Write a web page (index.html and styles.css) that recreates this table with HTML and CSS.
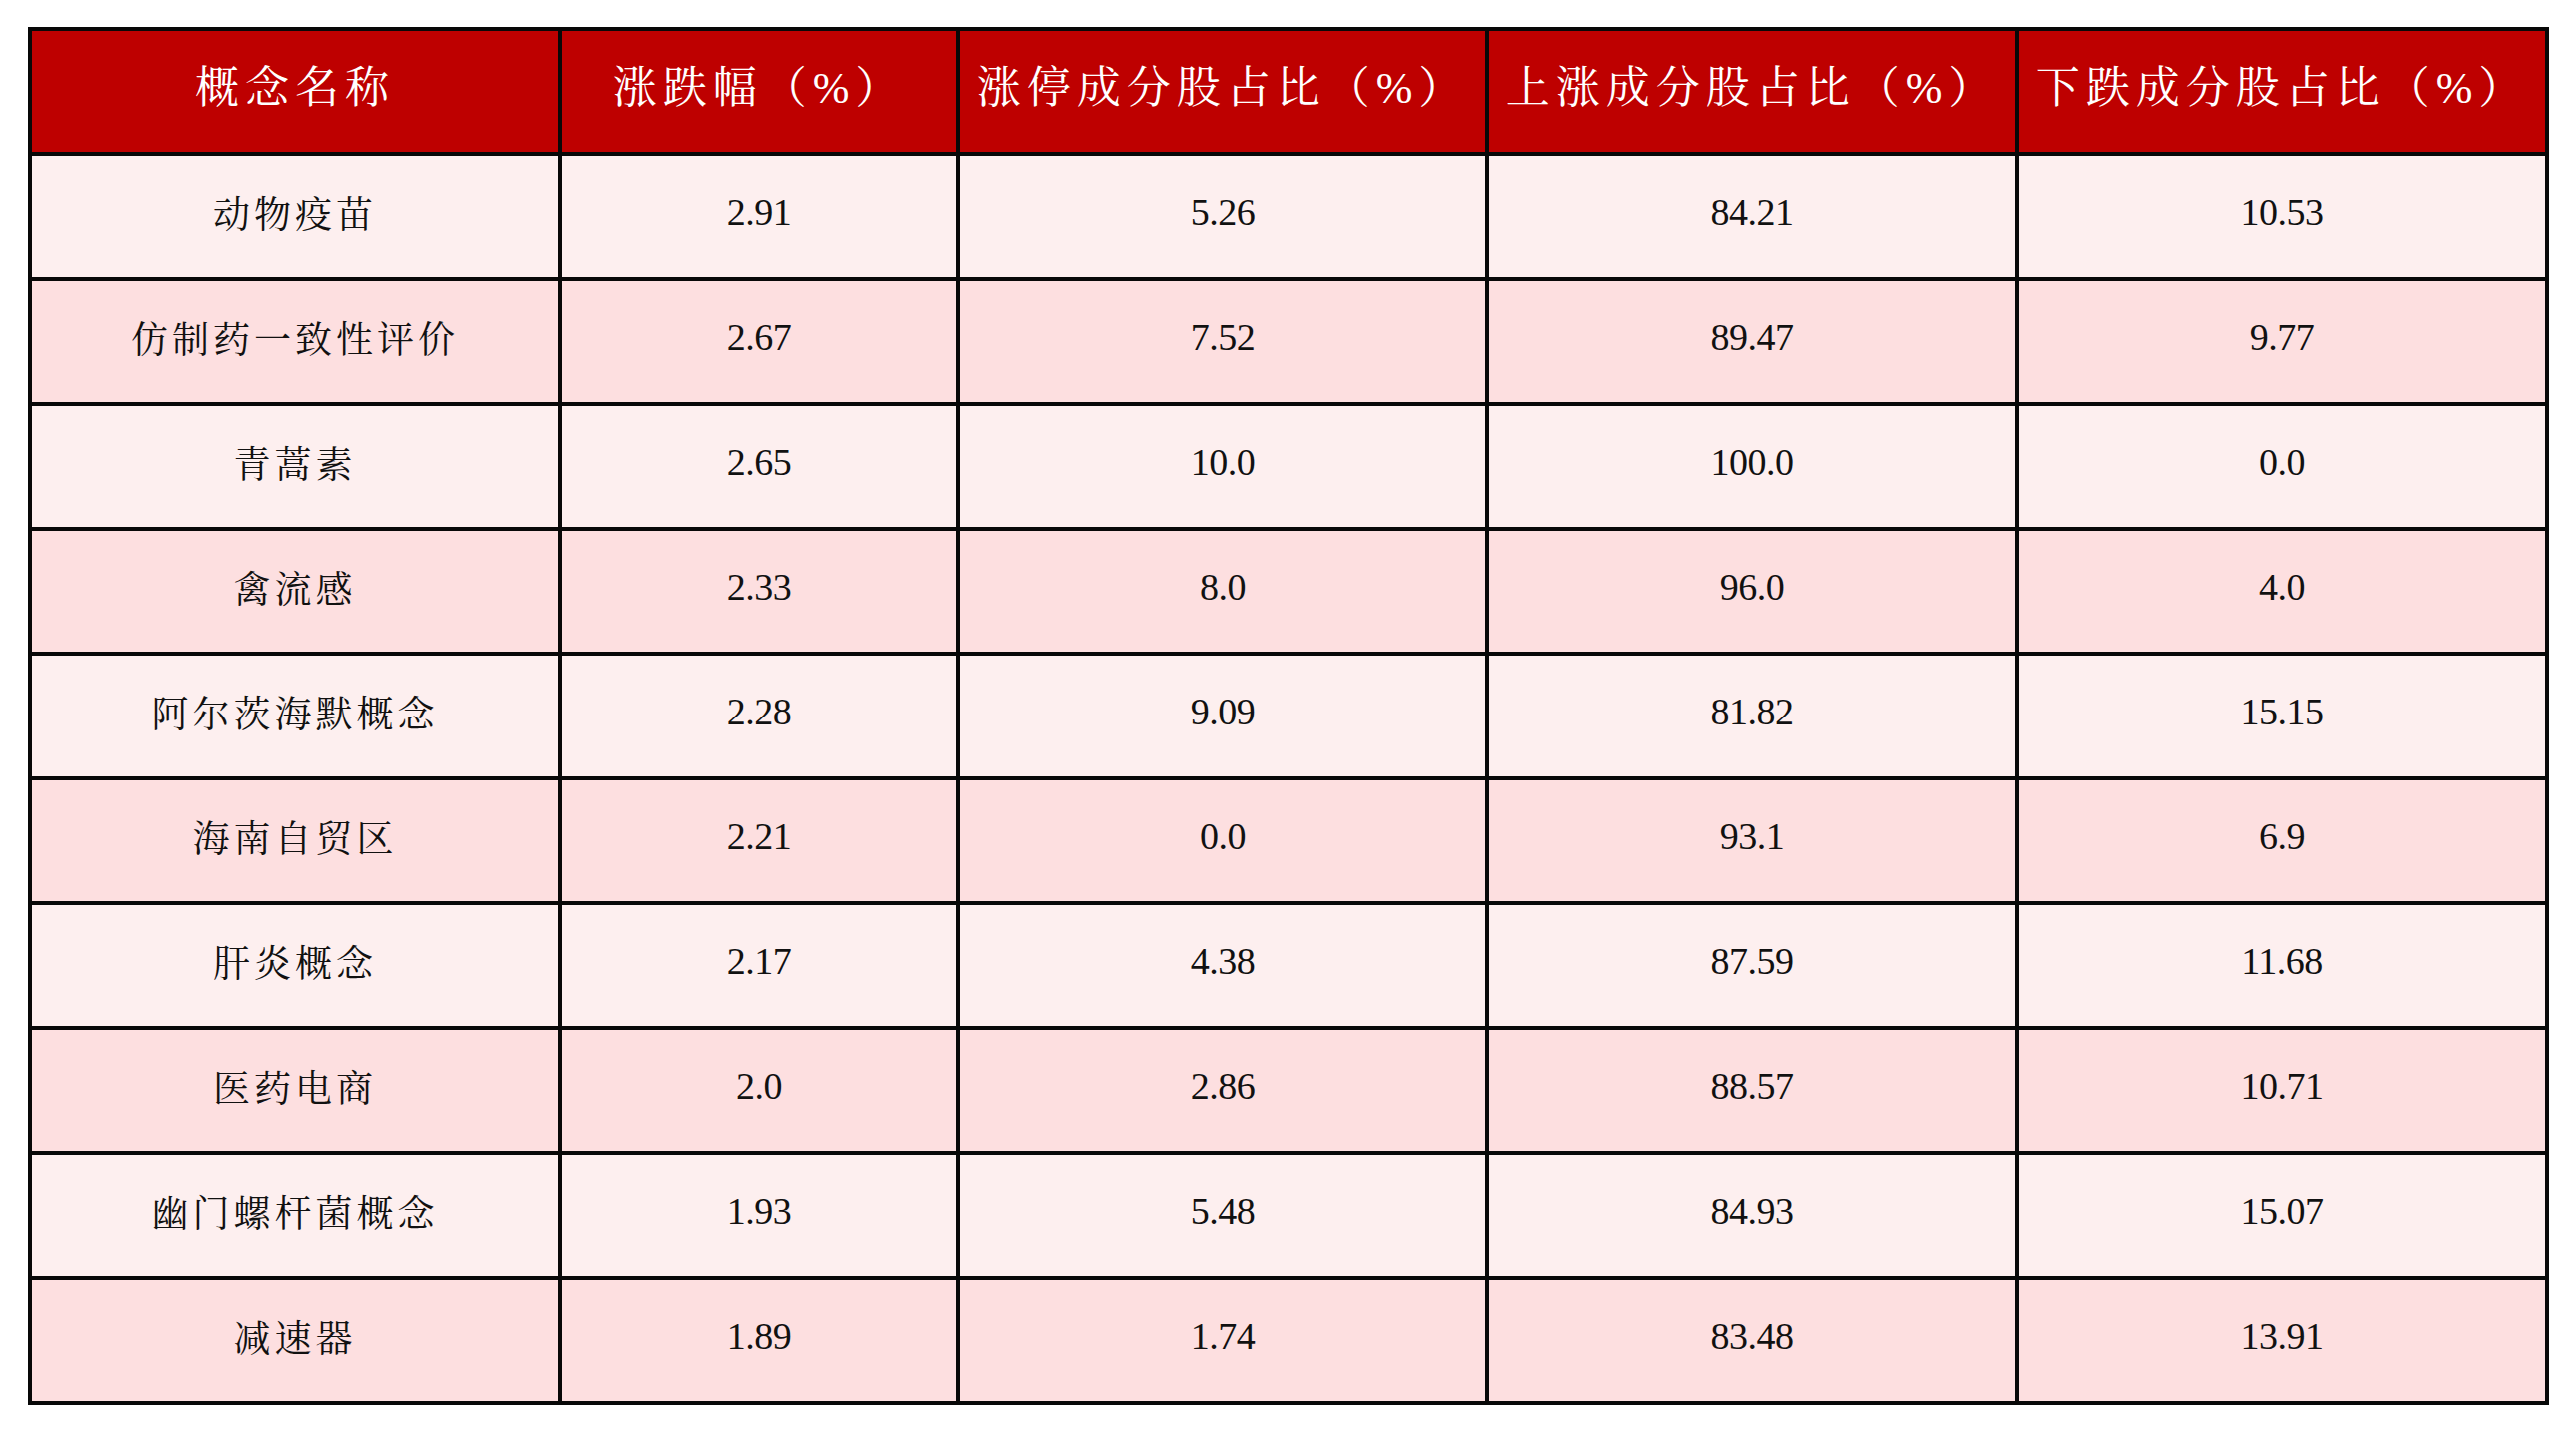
FILE: index.html
```html
<!DOCTYPE html>
<html lang="zh-CN">
<head>
<meta charset="utf-8">
<title>概念板块</title>
<link rel="stylesheet" href="styles.css">
</head>
<body>
<table class="grid">
  <colgroup>
    <col class="c-name"><col class="c-num"><col class="c-wide"><col class="c-wide"><col class="c-wide">
  </colgroup>
  <thead>
    <tr class="head">
      <th>概念名称</th>
      <th>涨跌幅（%）</th>
      <th>涨停成分股占比（%）</th>
      <th>上涨成分股占比（%）</th>
      <th>下跌成分股占比（%）</th>
    </tr>
  </thead>
  <tbody>
    <tr class="odd"><td class="name">动物疫苗</td><td>2.91</td><td>5.26</td><td>84.21</td><td>10.53</td></tr>
    <tr class="even"><td class="name">仿制药一致性评价</td><td>2.67</td><td>7.52</td><td>89.47</td><td>9.77</td></tr>
    <tr class="odd"><td class="name">青蒿素</td><td>2.65</td><td>10.0</td><td>100.0</td><td>0.0</td></tr>
    <tr class="even"><td class="name">禽流感</td><td>2.33</td><td>8.0</td><td>96.0</td><td>4.0</td></tr>
    <tr class="odd"><td class="name">阿尔茨海默概念</td><td>2.28</td><td>9.09</td><td>81.82</td><td>15.15</td></tr>
    <tr class="even"><td class="name">海南自贸区</td><td>2.21</td><td>0.0</td><td>93.1</td><td>6.9</td></tr>
    <tr class="odd"><td class="name">肝炎概念</td><td>2.17</td><td>4.38</td><td>87.59</td><td>11.68</td></tr>
    <tr class="even"><td class="name">医药电商</td><td>2.0</td><td>2.86</td><td>88.57</td><td>10.71</td></tr>
    <tr class="odd"><td class="name">幽门螺杆菌概念</td><td>1.93</td><td>5.48</td><td>84.93</td><td>15.07</td></tr>
    <tr class="even"><td class="name">减速器</td><td>1.89</td><td>1.74</td><td>83.48</td><td>13.91</td></tr>
  </tbody>
</table>
</body>
</html>
```

FILE: styles.css
```css
html, body {
  margin: 0;
  padding: 0;
  background: #ffffff;
}

.grid {
  margin: 27px 0 0 28px;
  width: 2522px;
  table-layout: fixed;
  border-collapse: separate;
  border-spacing: 4px;
  background: #080808;
  font-family: "Liberation Serif", "Noto Serif CJK SC", "Noto Sans CJK SC", serif;
}

.c-name { width: 526px; }
.c-num { width: 394px; }
.c-wide { width: 526px; }

.grid tr {
  height: 121px;
}

.grid th,
.grid td {
  padding: 0;
  text-align: center;
  vertical-align: middle;
}

.head th {
  background: #be0000;
  color: #ffffff;
  font-weight: normal;
  font-size: 44px;
  letter-spacing: 6px;
  padding-bottom: 16px;
}

.grid td {
  color: #111111;
  font-size: 38px;
  letter-spacing: -0.5px;
  padding-bottom: 9px;
}

.grid td.name {
  letter-spacing: 4px;
  font-size: 37px;
}

.odd td { background: #fdefef; }
.even td { background: #fddfe0; }
```
